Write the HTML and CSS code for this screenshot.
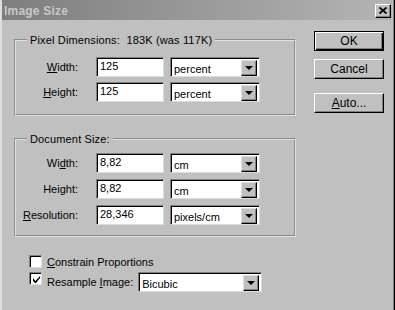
FILE: index.html
```html
<!DOCTYPE html>
<html lang="en">
<head>
    <meta charset="UTF-8">
    <title>Image Size</title>
    <link rel="stylesheet" href="styles.css">
</head>
<body>
    <div class="dialog">
        <div class="titlebar">
            <span class="title">Image Size</span>
            <span class="close">
                <svg width="8" height="7" viewBox="0 0 8 7"><path d="M0.5 0.5l7 6M7.5 0.5l-7 6" stroke="#000" stroke-width="1.8"/></svg>
            </span>
        </div>
        <div class="content">
            <div class="main">
                <fieldset class="group">
                    <legend>Pixel Dimensions:&nbsp; 183K (was 117K)</legend>
                    <div class="row">
                        <label><u>W</u>idth:</label>
                        <span class="field">125</span>
                        <span class="combo"><span class="value">percent</span><span class="drop"><i class="arrow"></i></span></span>
                    </div>
                    <div class="row">
                        <label><u>H</u>eight:</label>
                        <span class="field">125</span>
                        <span class="combo"><span class="value">percent</span><span class="drop"><i class="arrow"></i></span></span>
                    </div>
                </fieldset>

                <fieldset class="group doc">
                    <legend>Document Size:</legend>
                    <div class="row">
                        <label>Wi<u>d</u>th:</label>
                        <span class="field">8,82</span>
                        <span class="combo"><span class="value">cm</span><span class="drop"><i class="arrow"></i></span></span>
                    </div>
                    <div class="row">
                        <label>Hei<u>g</u>ht:</label>
                        <span class="field">8,82</span>
                        <span class="combo"><span class="value">cm</span><span class="drop"><i class="arrow"></i></span></span>
                    </div>
                    <div class="row">
                        <label><u>R</u>esolution:</label>
                        <span class="field">28,346</span>
                        <span class="combo"><span class="value">pixels/cm</span><span class="drop"><i class="arrow"></i></span></span>
                    </div>
                </fieldset>

                <div class="check-row">
                    <span class="checkbox"></span>
                    <span class="check-label"><u>C</u>onstrain Proportions</span>
                </div>
                <div class="check-row resample">
                    <span class="checkbox">
                        <svg width="9" height="9" viewBox="0 0 9 9"><path d="M1 3v3l2 2h1l4-5V1L3.5 6z" fill="#000"/></svg>
                    </span>
                    <span class="check-label">Resample <u>I</u>mage:</span>
                    <span class="combo wide"><span class="value">Bicubic</span><span class="drop"><i class="arrow"></i></span></span>
                </div>
            </div>

            <div class="buttons">
                <span class="btn default">OK</span>
                <span class="btn">Cancel</span>
                <span class="btn auto"><u>A</u>uto...</span>
            </div>
        </div>
    </div>
</body>
</html>
```

FILE: styles.css
```css
body {
    margin: 0;
    background-color: #c0c0c0;
    font-family: "Liberation Sans", Arial, sans-serif;
    font-size: 11px;
    color: #000;
}
.dialog {
    width: 395px;
    height: 310px;
    box-sizing: border-box;
    background-color: #c0c0c0;
    border-left: 2px solid #dfdfdf;
    border-right: 1px solid #000;
    box-shadow: inset -1px 0 #808080;
}
.titlebar {
    height: 19px;
    margin-right: 2px;
    padding-top: 1px;
    display: flex;
    align-items: center;
    justify-content: space-between;
    background: linear-gradient(to right, #7e7e7e, #b4b4b4);
}
.title {
    padding-left: 2px;
    font-size: 12px;
    font-weight: bold;
    color: #c8c8c8;
    letter-spacing: 0.2px;
}
.close {
    width: 16px;
    height: 14px;
    box-sizing: border-box;
    margin-right: 1px;
    display: flex;
    align-items: center;
    justify-content: center;
    background-color: #c0c0c0;
    border: 1px solid;
    border-color: #fff #000 #000 #fff;
    box-shadow: inset -1px -1px #808080;
}
.content {
    display: flex;
    padding: 13px 0 0 12px;
}
.main {
    width: 282px;
}
.group {
    margin: 0;
    padding: 10px 0 12px 0;
    border: 2px groove #e0e0e0;
}
.group legend {
    margin-left: 11px;
    padding: 0 3px;
    line-height: 14px;
    letter-spacing: 0.15px;
}
.doc {
    margin-top: 16px;
    padding-top: 7px;
    padding-bottom: 10px;
}
.row {
    display: flex;
    align-items: center;
    height: 20px;
}
.row + .row {
    margin-top: 5px;
}
.doc .row + .row {
    margin-top: 6px;
}
.row label {
    width: 62px;
    margin-right: 18px;
    text-align: right;
}
.field,
.combo,
.checkbox {
    box-sizing: border-box;
    background-color: #fff;
    border: 1px solid;
    border-color: #808080 #dcdcdc #dcdcdc #808080;
    box-shadow: inset 1px 1px #000;
}
.field {
    width: 68px;
    height: 20px;
    padding: 2px 0 0 3px;
    margin-right: 6px;
}
.combo {
    width: 90px;
    height: 20px;
    display: flex;
    align-items: center;
    justify-content: space-between;
    padding: 2px 2px 1px 3px;
}
.combo .value {
    padding-top: 2px;
}
.drop {
    width: 16px;
    height: 16px;
    box-sizing: border-box;
    display: flex;
    align-items: center;
    justify-content: center;
    background-color: #c0c0c0;
    border: 1px solid;
    border-color: #dfdfdf #000 #000 #dfdfdf;
    box-shadow: inset -1px -1px #808080;
}
.arrow {
    width: 0;
    height: 0;
    border-left: 4px solid transparent;
    border-right: 4px solid transparent;
    border-top: 4px solid #000;
}
.check-row {
    display: flex;
    align-items: center;
    margin-left: 15px;
    margin-top: 18px;
    height: 13px;
}
.check-row.resample {
    align-items: flex-start;
    margin-top: 4px;
    height: 20px;
}
.resample .check-label {
    align-self: center;
}
.checkbox {
    width: 13px;
    height: 13px;
    display: flex;
    align-items: center;
    justify-content: center;
    margin-right: 5px;
    padding: 1px 0 0 1px;
}
.check-label {
    margin-right: 5px;
}
.combo.wide {
    width: 124px;
}
.buttons {
    display: flex;
    flex-direction: column;
    margin-left: 18px;
    margin-top: -2px;
}
.btn {
    width: 70px;
    height: 20px;
    box-sizing: border-box;
    display: flex;
    align-items: center;
    justify-content: center;
    background-color: #c0c0c0;
    border: 1px solid;
    border-color: #fff #000 #000 #fff;
    box-shadow: inset -1px -1px #808080;
    margin-bottom: 8px;
    font-size: 12px;
}
.btn.default {
    border: 1px solid #000;
    box-shadow: inset 1px 1px #fff, inset -1px -1px #000, inset -2px -2px #808080;
}
.btn.auto {
    margin-top: 6px;
}
```
